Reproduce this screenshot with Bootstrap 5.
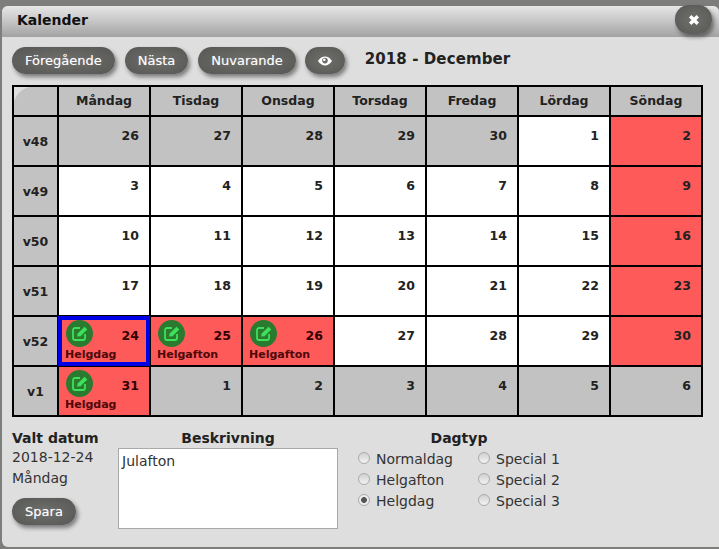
<!DOCTYPE html>
<html lang="sv">
<head>
<meta charset="utf-8">
<title>Kalender</title>
<link rel="stylesheet" href="https://cdn.jsdelivr.net/npm/bootstrap@5.3.0/dist/css/bootstrap.min.css">
<style>
html,body{height:100%;}
body{margin:0;background:#7d7d7b;font-family:"DejaVu Sans",Verdana,sans-serif;color:#222;overflow:hidden;}
.shell{height:549px;padding:6px 0 2px 2px;}
.win{height:541px;background:#dedede;border-radius:6px 6px 0 6px;display:flex;flex-direction:column;}
.win-head{height:31px;flex:none;background:linear-gradient(#e6e6e6,#c9c9c9 45%,#a2a2a2);border-radius:6px 6px 0 0;padding:0 7px 0 15px;display:flex;align-items:center;justify-content:space-between;}
.win-title{font-size:14px;font-weight:700;color:#111;margin:0;line-height:1;position:relative;top:-2px;}
.gbtn{background:radial-gradient(ellipse at 50% 50%,#6f6f6c,#565654);color:#fff;border:0;border-radius:14px;font-size:13px;line-height:16px;height:27px;padding:0 13px;box-shadow:2px 3px 4px rgba(0,0,0,.45);text-shadow:0 0 1px rgba(255,255,255,.4);}
.gbtn:hover,.gbtn:focus{background:#5c5c5a;color:#fff;}
.gclose{width:37px;height:29px;padding:0;border-radius:14px;margin-top:-2px;display:flex;align-items:center;justify-content:center;position:relative;top:-1px;}
.win-main{padding:10px 16px 0 10px;flex:1;}
.tools{height:27px;display:flex;align-items:center;gap:10px;margin-bottom:11px;}
.geye{width:40px;padding:0;display:flex;align-items:center;justify-content:center;margin-left:-1px;}
.month{font-size:15px;font-weight:700;color:#222;margin-left:10px;letter-spacing:.1px;position:relative;top:-1px;}
.calgrid{border-collapse:collapse;table-layout:fixed;width:691px;margin:0;}
.calgrid th,.calgrid td{border:2px solid #000;padding:0;font-size:12.5px;font-weight:700;color:#222;background:#c2c2c2;}
.calgrid thead th{height:30px;text-align:center;}
.calgrid .wk{width:45px;text-align:center;vertical-align:middle;padding-top:2px;}
.calgrid .dcol{width:92px;}
.calgrid td{height:50px;vertical-align:top;}
.calgrid td.plain{background:#fff;}
.calgrid td.red{background:#ff5a5a;}
.calgrid th.corner{border-top-left-radius:22px;}
.dnum{display:flex;justify-content:flex-end;padding:11px 10px 0 0;line-height:16px;}
.marked{position:relative;}
.marked .dnum{padding-top:11px;}
.pen{position:absolute;left:7px;top:3px;width:27px;height:27px;}
.dlabel{position:absolute;left:6px;bottom:3px;font-size:11px;line-height:14px;color:#4d0808;white-space:nowrap;}
.marked .dnum{color:#300;}
.sel{outline:4px solid #0000e6;outline-offset:-4px;}
.lower{display:flex;margin-top:12px;font-size:14px;color:#333;}
.lower h6{font-size:14px;font-weight:700;color:#222;margin:0;line-height:18px;}
.lo-date{width:106px;line-height:21px;}
.lo-date div{height:21px;}
.lo-date .gbtn{margin-top:9px;width:64px;padding:0;}
.lo-text{width:220px;text-align:center;}
.notes{display:block;width:220px;height:81px;margin-top:1px;border:1px solid #a9a9a9;background:#fff;padding:3px;font:14px/18px "DejaVu Sans",Verdana,sans-serif;color:#333;resize:none;border-radius:0;}
.lo-type{margin-left:20px;width:202px;}
.lo-type h6{text-align:center;}
.typegrid{display:grid;grid-template-columns:120px 1fr;grid-auto-rows:21px;margin-top:2px;}
.pick{display:flex;align-items:center;gap:6px;height:21px;line-height:21px;}
.ring{width:12px;height:12px;border-radius:50%;border:1px solid #aaa;background:linear-gradient(#d0d0d0,#f3f3f3);flex:none;position:relative;top:-2px;}
.ring.on{background:radial-gradient(circle,#555 0 2.6px,#eee 3.2px);}
</style>
</head>
<body>
<div class="shell">
<div class="win">
  <div class="win-head">
    <h5 class="win-title">Kalender</h5>
    <button type="button" class="btn gbtn gclose" aria-label="Stäng">
      <svg width="12" height="12" viewBox="0 0 12 12"><path d="M1 3.4 3.4 1 6 3.6 8.6 1 11 3.4 8.4 6 11 8.6 8.6 11 6 8.4 3.4 11 1 8.6 3.6 6Z" fill="#fff"/></svg>
    </button>
  </div>
  <div class="win-main">
    <div class="tools">
      <button type="button" class="btn gbtn">Föregående</button>
      <button type="button" class="btn gbtn">Nästa</button>
      <button type="button" class="btn gbtn">Nuvarande</button>
      <button type="button" class="btn gbtn geye" aria-label="Visa">
        <svg width="14" height="10" viewBox="0 0 14 10"><path fill-rule="evenodd" d="M0 5C2 2 4.400.6 7 .6S12 2 14 5c-2 3-4.400 4.400-7 4.400S2 8 0 5Zm4.200-.4a2.800 2.800 0 1 0 5.600 0 2.800 2.800 0 0 0-5.600 0Z" fill="#fff"/><circle cx="6.300" cy="3.800" r="1.300" fill="#fff"/></svg>
      </button>
      <span class="month">2018 - December</span>
    </div>
    <table class="calgrid">
      <thead>
        <tr><th class="wk corner"></th><th class="dcol">Måndag</th><th class="dcol">Tisdag</th><th class="dcol">Onsdag</th><th class="dcol">Torsdag</th><th class="dcol">Fredag</th><th class="dcol">Lördag</th><th class="dcol">Söndag</th></tr>
      </thead>
      <tbody>
        <tr><th class="wk">v48</th><td><div class="dnum">26</div></td><td><div class="dnum">27</div></td><td><div class="dnum">28</div></td><td><div class="dnum">29</div></td><td><div class="dnum">30</div></td><td class="plain"><div class="dnum">1</div></td><td class="red"><div class="dnum">2</div></td></tr>
        <tr><th class="wk">v49</th><td class="plain"><div class="dnum">3</div></td><td class="plain"><div class="dnum">4</div></td><td class="plain"><div class="dnum">5</div></td><td class="plain"><div class="dnum">6</div></td><td class="plain"><div class="dnum">7</div></td><td class="plain"><div class="dnum">8</div></td><td class="red"><div class="dnum">9</div></td></tr>
        <tr><th class="wk">v50</th><td class="plain"><div class="dnum">10</div></td><td class="plain"><div class="dnum">11</div></td><td class="plain"><div class="dnum">12</div></td><td class="plain"><div class="dnum">13</div></td><td class="plain"><div class="dnum">14</div></td><td class="plain"><div class="dnum">15</div></td><td class="red"><div class="dnum">16</div></td></tr>
        <tr><th class="wk">v51</th><td class="plain"><div class="dnum">17</div></td><td class="plain"><div class="dnum">18</div></td><td class="plain"><div class="dnum">19</div></td><td class="plain"><div class="dnum">20</div></td><td class="plain"><div class="dnum">21</div></td><td class="plain"><div class="dnum">22</div></td><td class="red"><div class="dnum">23</div></td></tr>
        <tr><th class="wk">v52</th>
          <td class="red marked sel"><svg class="pen" viewBox="0 0 27 27"><use href="#penicon"/></svg><div class="dnum">24</div><div class="dlabel">Helgdag</div></td>
          <td class="red marked"><svg class="pen" viewBox="0 0 27 27"><use href="#penicon"/></svg><div class="dnum">25</div><div class="dlabel">Helgafton</div></td>
          <td class="red marked"><svg class="pen" viewBox="0 0 27 27"><use href="#penicon"/></svg><div class="dnum">26</div><div class="dlabel">Helgafton</div></td>
          <td class="plain"><div class="dnum">27</div></td><td class="plain"><div class="dnum">28</div></td><td class="plain"><div class="dnum">29</div></td><td class="red"><div class="dnum">30</div></td></tr>
        <tr><th class="wk">v1</th>
          <td class="red marked"><svg class="pen" viewBox="0 0 27 27"><use href="#penicon"/></svg><div class="dnum">31</div><div class="dlabel">Helgdag</div></td>
          <td><div class="dnum">1</div></td><td><div class="dnum">2</div></td><td><div class="dnum">3</div></td><td><div class="dnum">4</div></td><td><div class="dnum">5</div></td><td><div class="dnum">6</div></td></tr>
      </tbody>
    </table>
    <div class="lower">
      <div class="lo-date">
        <h6>Valt datum</h6>
        <div>2018-12-24</div>
        <div>Måndag</div>
        <button type="button" class="btn gbtn">Spara</button>
      </div>
      <div class="lo-text">
        <h6>Beskrivning</h6>
        <textarea class="notes" aria-label="Beskrivning">Julafton</textarea>
      </div>
      <div class="lo-type">
        <h6>Dagtyp</h6>
        <div class="typegrid">
          <div class="pick"><span class="ring"></span>Normaldag</div><div class="pick"><span class="ring"></span>Special 1</div>
          <div class="pick"><span class="ring"></span>Helgafton</div><div class="pick"><span class="ring"></span>Special 2</div>
          <div class="pick"><span class="ring on"></span>Helgdag</div><div class="pick"><span class="ring"></span>Special 3</div>
        </div>
      </div>
    </div>
  </div>
</div>
</div>
<svg width="0" height="0" class="d-block" aria-hidden="true"><defs>
  <g id="penicon">
    <circle cx="13.500" cy="13.500" r="13.500" fill="#2a7a2f"/>
    <path d="M14 8H9a2 2 0 0 0-2 2v8a2 2 0 0 0 2 2h8a2 2 0 0 0 2-2v-4" fill="none" stroke="#3ee05a" stroke-width="1.800"/>
    <path d="M11 16.500l.7-3L18.500 6.700l2.800 2.800L14.500 16.300Z" fill="#3ee05a"/>
  </g>
</defs></svg>
</body>
</html>
